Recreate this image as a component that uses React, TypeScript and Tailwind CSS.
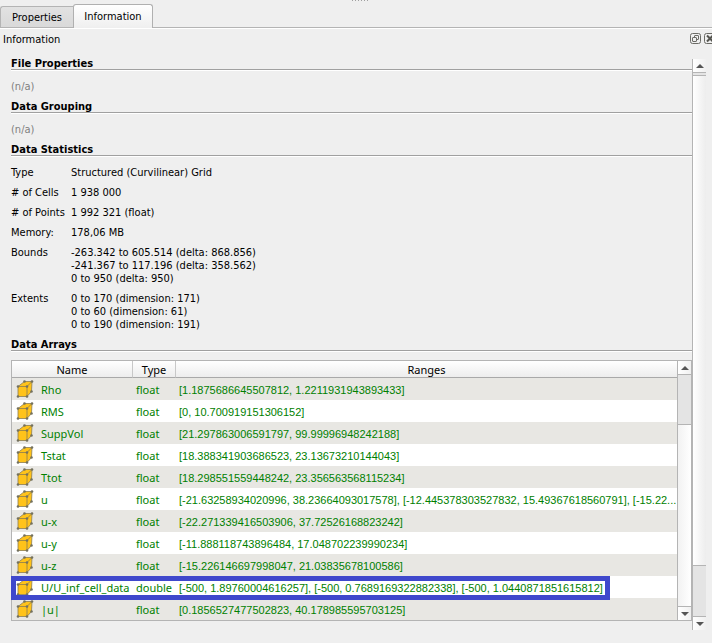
import React, { useState } from "react"

type DataArray = {
    name: string
    type: string
    ranges: string
}

const stats = [
    { label: "Type", values: ["Structured (Curvilinear) Grid"] },
    { label: "# of Cells", values: ["1 938 000"] },
    { label: "# of Points", values: ["1 992 321 (float)"] },
    { label: "Memory:", values: ["178,06 MB"] },
    {
        label: "Bounds",
        values: [
            "-263.342 to 605.514 (delta: 868.856)",
            "-241.367 to 117.196 (delta: 358.562)",
            "0 to 950 (delta: 950)",
        ],
    },
    {
        label: "Extents",
        values: ["0 to 170 (dimension: 171)", "0 to 60 (dimension: 61)", "0 to 190 (dimension: 191)"],
    },
]

const arrays: DataArray[] = [
    { name: "Rho", type: "float", ranges: "[1.1875686645507812, 1.2211931943893433]" },
    { name: "RMS", type: "float", ranges: "[0, 10.700919151306152]" },
    { name: "SuppVol", type: "float", ranges: "[21.297863006591797, 99.99996948242188]" },
    { name: "Tstat", type: "float", ranges: "[18.388341903686523, 23.13673210144043]" },
    { name: "Ttot", type: "float", ranges: "[18.298551559448242, 23.356563568115234]" },
    { name: "u", type: "float", ranges: "[-21.63258934020996, 38.23664093017578], [-12.445378303527832, 15.49367618560791], [-15.22..." },
    { name: "u-x", type: "float", ranges: "[-22.271339416503906, 37.72526168823242]" },
    { name: "u-y", type: "float", ranges: "[-11.888118743896484, 17.048702239990234]" },
    { name: "u-z", type: "float", ranges: "[-15.226146697998047, 21.03835678100586]" },
    { name: "U/U_inf_cell_data", type: "double", ranges: "[-500, 1.89760004616257], [-500, 0.7689169322882338], [-500, 1.0440871851615812]" },
    { name: "|u|", type: "float", ranges: "[0.1856527477502823, 40.178985595703125]" },
]

const corners = [
    [2, 7.5],
    [11, 7.5],
    [11, 17.5],
    [2, 17.5],
    [8.5, 2.5],
    [16, 2.5],
    [15.5, 12.5],
]

function CellDataIcon() {
    return (
        <svg width="18" height="20" viewBox="0 0 18 20" className="shrink-0" aria-hidden="true">
            <path d="M2 7.5 L8.5 2.5 H16 L15.5 12.5 L11 17.5 H2 Z" fill="#ffc31a" />
            <path
                d="M2 7.5 L8.5 2.5 H16 L15.5 12.5 L11 17.5 H2 Z M2 7.5 H11 L16 2.5 M11 7.5 V17.5"
                fill="none"
                stroke="#8c7c50"
                strokeWidth="0.8"
            />
            {corners.map(([x, y]) => (
                <circle key={`${x}-${y}`} cx={x} cy={y} r="1.3" fill="#73715f" />
            ))}
        </svg>
    )
}

function ArrowButton({ down = false }: { down?: boolean }) {
    return (
        <button
            type="button"
            aria-label={down ? "Scroll down" : "Scroll up"}
            className="flex h-[13px] w-full shrink-0 items-center justify-center bg-linear-to-r from-white to-[#f0f0f0]"
        >
            <svg width="8" height="4" viewBox="0 0 8 4" aria-hidden="true">
                <path d={down ? "M0 0 H8 L4 4 Z" : "M0 4 H8 L4 0 Z"} fill="#555" />
            </svg>
        </button>
    )
}

function SectionTitle({ children }: { children: React.ReactNode }) {
    return (
        <h2 className="border-b border-[#a0a0a0] pt-[3px] text-[11px] leading-[11px] font-bold shadow-[0_1px_0_#fff]">
            {children}
        </h2>
    )
}

function ArraysTable() {
    return (
        <div className="relative flex border border-[#b4b4b4] bg-white font-['Noto_Sans',sans-serif] text-[11px]">
            <div className="min-w-0 flex-1">
                <table className="w-full table-fixed border-separate border-spacing-0">
                    <thead>
                        <tr className="h-[17px] bg-linear-to-b from-white to-[#ececec] leading-[14px]">
                            <th className="w-[121px] border-r border-b border-r-[#c8c8c8] border-b-[#a9a9a9] p-0 pt-[2px] font-normal">Name</th>
                            <th className="w-[43px] border-r border-b border-r-[#c8c8c8] border-b-[#a9a9a9] p-0 pt-[2px] font-normal">Type</th>
                            <th className="border-b border-[#a9a9a9] p-0 pt-[2px] font-normal">Ranges</th>
                        </tr>
                    </thead>
                    <tbody className="text-[#008000]">
                        {arrays.map((a) => (
                            <tr key={a.name} className="h-[22px] odd:bg-[#e8e7e3]">
                                <td className="p-0">
                                    <div className="flex h-[22px] items-center gap-[7px] pl-1 whitespace-nowrap">
                                        <CellDataIcon />
                                        {a.name}
                                    </div>
                                </td>
                                <td className="p-0 pl-[3px]">{a.type}</td>
                                <td className="overflow-hidden p-0 pt-[2px] pl-[3px] font-['Liberation_Sans',Arial,sans-serif] whitespace-nowrap">{a.ranges}</td>
                            </tr>
                        ))}
                    </tbody>
                </table>
            </div>
            <div className="flex w-[14px] shrink-0 flex-col border-l border-[#b4b4b4] bg-linear-to-r from-[#f2f2f2] to-white">
                <ArrowButton />
                <div className="h-[51px] border-y border-[#b4b4b4] bg-[#e4e4e4]" />
                <div className="flex-1 border-b border-[#b4b4b4]" />
                <ArrowButton down />
            </div>
            {/* Marker around the U/U_inf_cell_data row */}
            <div className="pointer-events-none absolute top-[215px] -left-px h-6 w-[599px] border-5 border-[#3f48cc]" />
        </div>
    )
}

export default function App() {
    const [tab, setTab] = useState("Information")

    return (
        <div className="min-h-screen overflow-hidden bg-[#efefef] font-['DejaVu_Sans_Condensed','DejaVu_Sans',sans-serif] text-[11px] leading-[13px] text-black">
            {/* Splitter grip */}
            <div className="flex h-1 justify-center gap-[2px] pl-2">
                {[0, 1, 2, 3, 4, 5].map((i) => (
                    <span key={i} className="h-px w-px bg-[#a0a0a0]" />
                ))}
            </div>

            <div role="tablist" className="flex h-6 items-end border-b border-[#b4b4b4] shadow-[0_1px_0_#fff]">
                {["Properties", "Information"].map((name) => (
                    <button
                        key={name}
                        type="button"
                        role="tab"
                        aria-selected={tab === name}
                        onClick={() => setTab(name)}
                        className={
                            tab === name
                                ? "-mb-px h-6 w-20 shrink-0 rounded-t-[3px] border border-b-0 border-[#b0b0b0] bg-linear-to-b from-white to-[#efefef]"
                                : "h-[21px] w-[73px] shrink-0 rounded-tl-[3px] border border-r-0 border-b-0 border-[#b4b4b4] bg-linear-to-b from-[#e2e2e2] to-[#d9d9d9]"
                        }
                    >
                        {name}
                    </button>
                ))}
            </div>

            <div className="flex h-[27px] items-start pt-[5px]">
                <h1 className="flex-1 pl-[3px]">Information</h1>
                <div className="-mr-1 flex gap-[3px]">
                    <button type="button" aria-label="Float panel">
                        <svg width="11" height="11" viewBox="0 0 11 11" fill="none" stroke="#6b6b66" aria-hidden="true">
                            <rect x="0.5" y="0.5" width="10" height="10" rx="2" />
                            <rect x="4.5" y="2.5" width="4" height="4" rx="0.5" />
                            <rect x="2.5" y="4.5" width="4" height="4" rx="0.5" fill="#efefef" />
                        </svg>
                    </button>
                    <button type="button" aria-label="Close panel">
                        <svg width="12" height="11" viewBox="0 0 12 11" fill="none" stroke="#6b6b66" aria-hidden="true">
                            <rect x="0.5" y="0.5" width="11" height="10" rx="2" />
                            <path d="M3 2.5 L9 8.5 M9 2.5 L3 8.5" stroke="#555550" strokeWidth="2" />
                        </svg>
                    </button>
                </div>
            </div>

            <div className="flex pr-[6px]">
                <main className="min-w-0 flex-1 pl-[11px]">
                    <SectionTitle>File Properties</SectionTitle>
                    <p className="pt-[10px] pb-[5px] text-[#808080]">(n/a)</p>
                    <SectionTitle>Data Grouping</SectionTitle>
                    <p className="pt-[10px] pb-[5px] text-[#808080]">(n/a)</p>
                    <SectionTitle>Data Statistics</SectionTitle>
                    <dl className="flex flex-col gap-[7px] pt-[10px] pb-[5px]">
                        {stats.map((s) => (
                            <div key={s.label} className="flex">
                                <dt className="w-[60px] shrink-0 whitespace-nowrap">{s.label}</dt>
                                <dd>
                                    {s.values.map((v) => (
                                        <div key={v}>{v}</div>
                                    ))}
                                </dd>
                            </div>
                        ))}
                    </dl>
                    <SectionTitle>Data Arrays</SectionTitle>
                    <div className="pt-[9px]">
                        <ArraysTable />
                    </div>
                </main>
                <div className="mt-1 -mb-[9px] flex w-[14px] shrink-0 flex-col border-l border-[#b4b4b4] bg-linear-to-r from-white to-[#ededed]">
                    <ArrowButton />
                    <div className="h-1 border-y border-[#b4b4b4] bg-[#e4e4e4]" />
                    <div className="flex-1" />
                    <div className="h-[52px] border-y border-[#b4b4b4] bg-[#e4e4e4]" />
                    <ArrowButton down />
                </div>
            </div>
        </div>
    )
}
